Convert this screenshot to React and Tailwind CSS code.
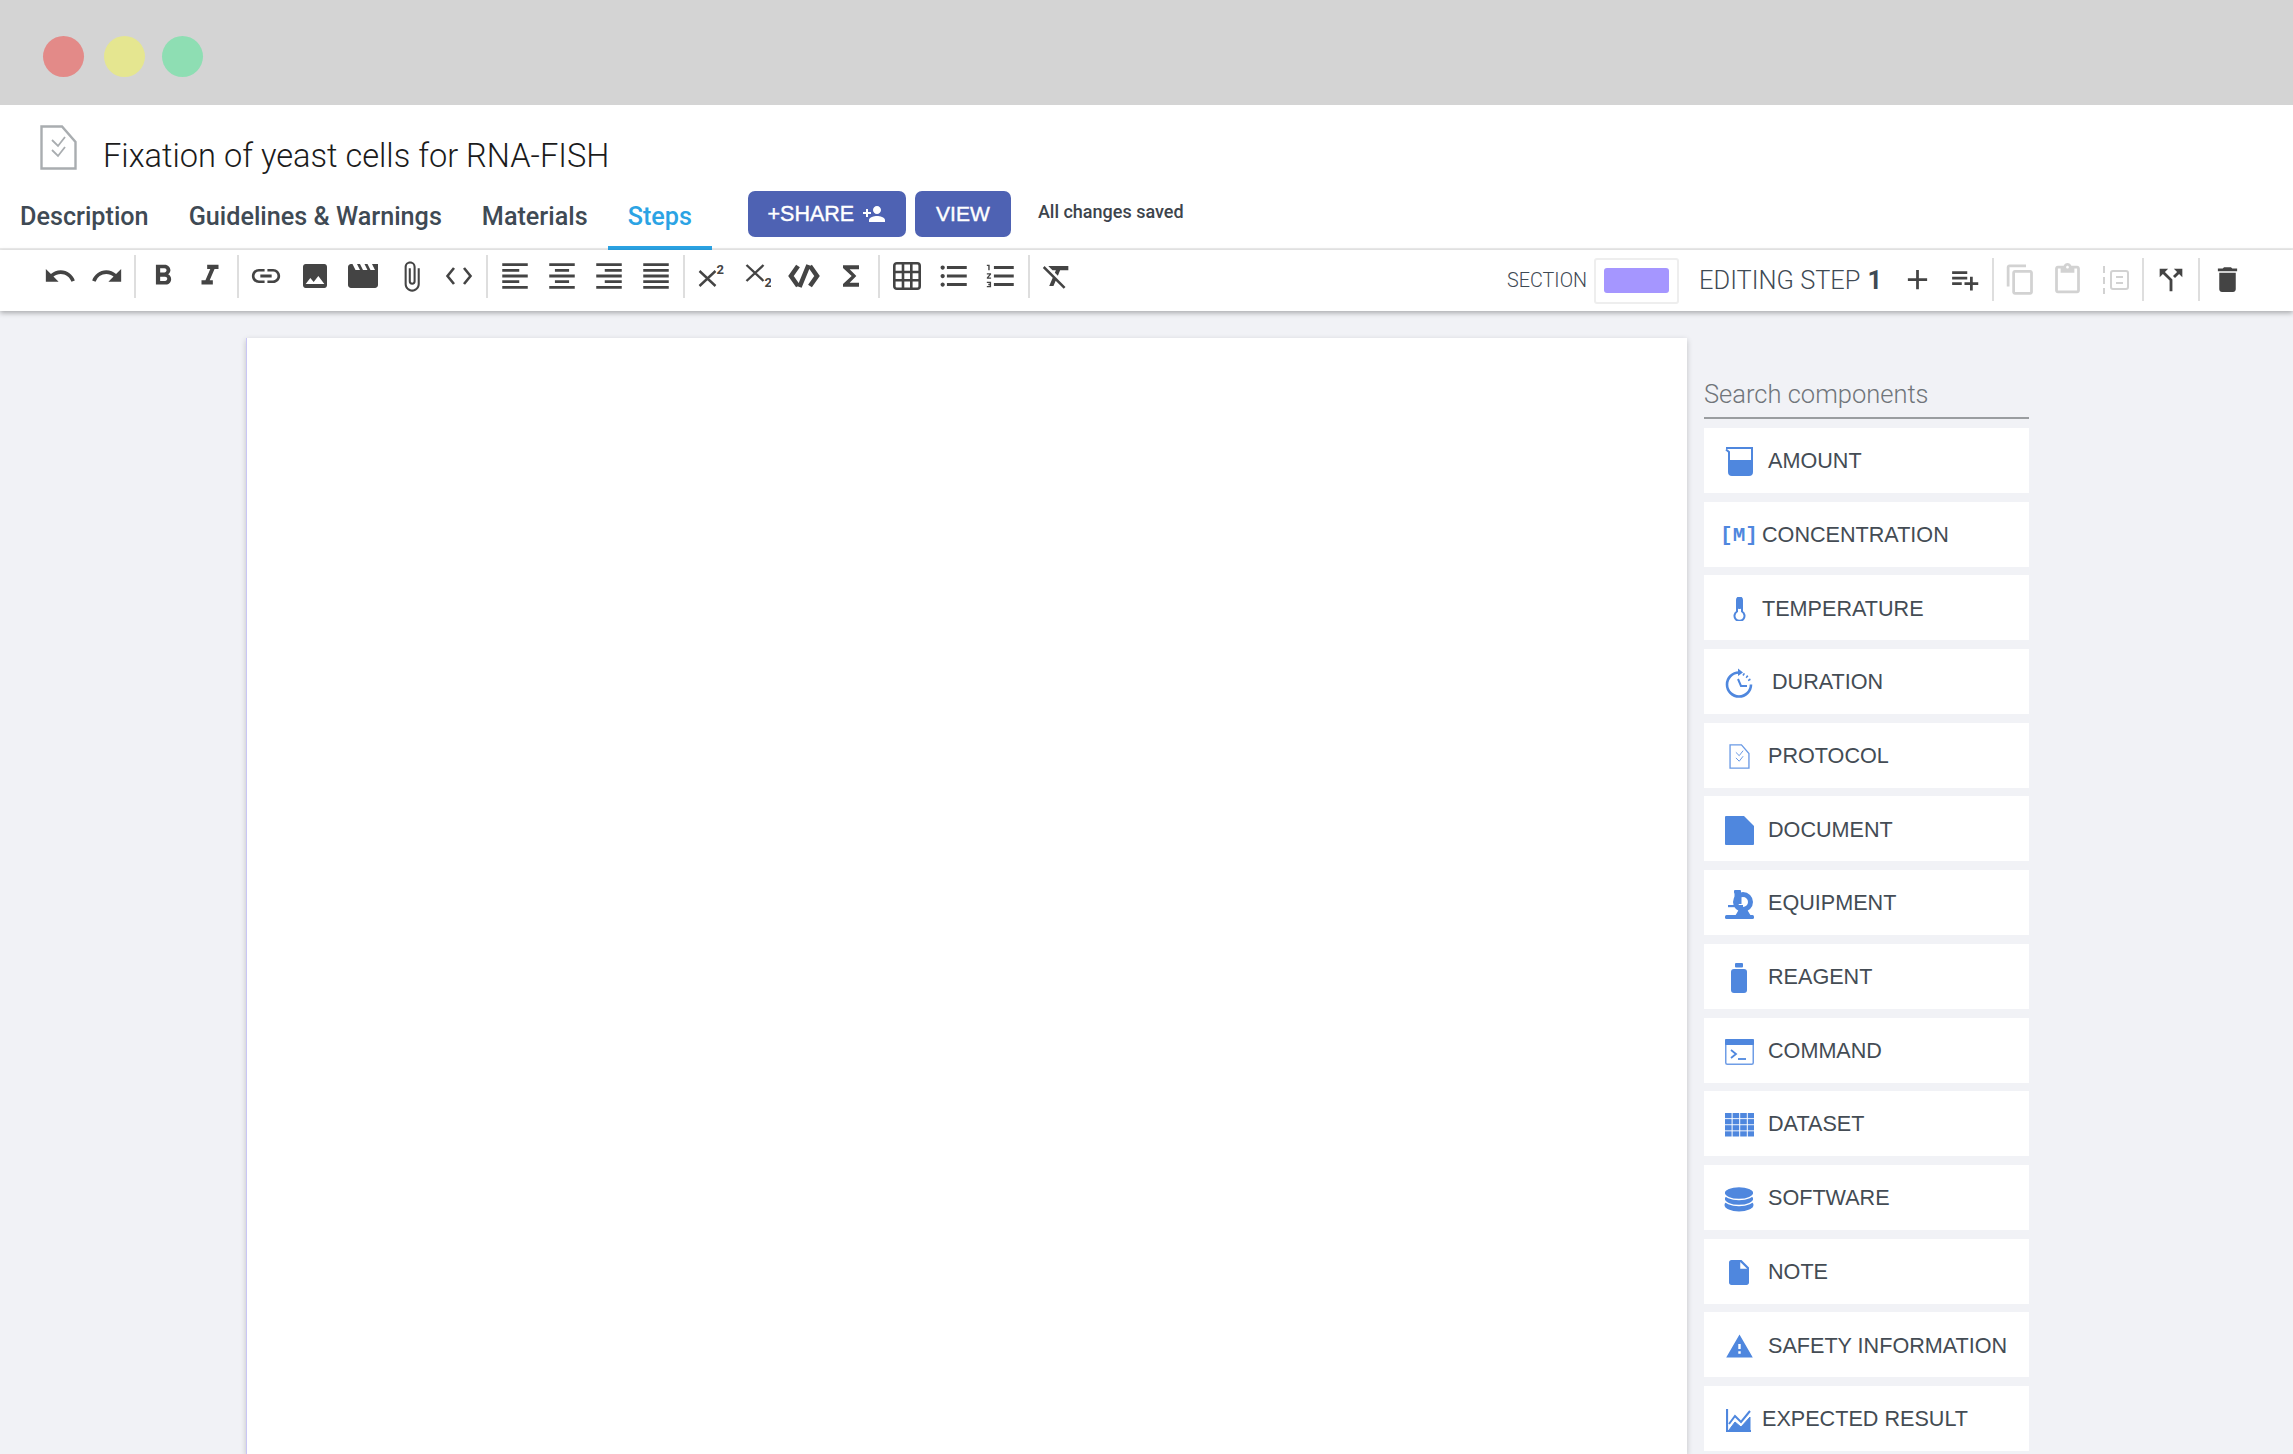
import {
  MdUndo, MdRedo, MdFormatBold, MdFormatItalic, MdLink, MdPhoto, MdMovie, MdAttachFile,
  MdFormatAlignLeft, MdFormatAlignCenter, MdFormatAlignRight, MdFormatAlignJustify,
  MdFunctions, MdFormatListBulleted, MdFormatListNumbered, MdFormatClear,
  MdAdd, MdPlaylistAdd, MdContentCopy, MdContentPaste, MdCallSplit, MdDelete,
  MdPersonAdd, MdInsertDriveFile, MdWarning,
} from 'react-icons/md'

const BLUE = '#4f87de'

function FileCheck({ className, color, width = 37, height = 45 }) {
  return (
    <svg className={className} width={width} height={height} viewBox="0 0 37 45" fill="none" stroke={color} strokeWidth="2.4">
      <path d="M1.5 1.5H22L35.5 17V43.5H1.5Z" />
      <path d="M12 15l6 6 7-9M12 25l6 6 7-9" strokeWidth="1.8" />
    </svg>
  )
}

function Beaker() {
  return (
    <svg width="28" height="30" viewBox="0 0 28 30">
      <path d="M1 2H27V26a3 3 0 0 1-3 3H7a3 3 0 0 1-3-3V6L1 3.5" fill="none" stroke={BLUE} strokeWidth="2" />
      <path d="M4 14H27V26a3 3 0 0 1-3 3H7a3 3 0 0 1-3-3Z" fill={BLUE} />
    </svg>
  )
}

function Thermometer() {
  return (
    <svg width="13" height="24" viewBox="0 0 13 24">
      <path d="M4 3a2.5 2.5 0 0 1 5 0V14.5a5 5 0 1 1-5 0Z" fill="none" stroke={BLUE} strokeWidth="2" />
      <rect x="4" y="1" width="5" height="11" rx="2" fill={BLUE} />
    </svg>
  )
}

function Duration() {
  return (
    <svg width="28" height="30" viewBox="0 0 28 30" fill="none" stroke={BLUE}>
      <path d="M14 4.5A12 12 0 1 0 26 16.5" strokeWidth="2.6" />
      <path d="M18 6l3.5 2.2 2.5 3 1.3 3" strokeWidth="2.6" strokeDasharray="1.6 2.4" />
      <path d="M13 11l3 7h6" strokeWidth="2" />
      <path d="M13 0.5l5 4-5 3.5Z" fill={BLUE} stroke="none" />
    </svg>
  )
}

function Doc() {
  return (
    <svg width="29" height="29" viewBox="0 0 29 29">
      <path d="M0 1a1 1 0 0 1 1-1H19L29 10V28a1 1 0 0 1-1 1H1a1 1 0 0 1-1-1Z" fill={BLUE} />
    </svg>
  )
}

function Microscope() {
  return (
    <svg width="29" height="29" viewBox="0 0 29 29" fill={BLUE}>
      <rect x="9" y="0" width="7" height="3.5" rx="1" />
      <rect x="9.5" y="3" width="7" height="11" />
      <circle cx="18" cy="12" r="7.5" fill="none" stroke={BLUE} strokeWidth="5" />
      <rect x="3" y="15" width="15" height="2.2" />
      <path d="M10 26l4-6.5h8l4 6.5Z" />
      <rect x="0" y="25" width="29" height="4" rx="1.5" />
    </svg>
  )
}

function Bottle() {
  return (
    <svg width="18" height="30" viewBox="0 0 18 30" fill={BLUE}>
      <rect x="5" y="0" width="8" height="4.5" rx="1" />
      <path d="M1 9a3 3 0 0 1 3-3h10a3 3 0 0 1 3 3v18a3 3 0 0 1-3 3H4a3 3 0 0 1-3-3Z" />
    </svg>
  )
}

function Command() {
  return (
    <svg width="29" height="26" viewBox="0 0 29 26" fill="none">
      <rect x="0.75" y="0.75" width="27.5" height="24.5" rx="1.5" stroke="#6f9de6" strokeWidth="1.5" />
      <rect x="0" y="0" width="29" height="6" rx="1" fill={BLUE} />
      <path d="M6 11l5 4-5 4" stroke={BLUE} strokeWidth="1.8" />
      <path d="M13 20h8" stroke={BLUE} strokeWidth="1.8" />
    </svg>
  )
}

function Dataset() {
  const cells = []
  for (let r = 0; r < 4; r++) {
    for (let c = 0; c < 4; c++) {
      cells.push(<rect key={`${r}-${c}`} x={c * 7.6} y={r * 6.1} width="6.6" height="5.2" />)
    }
  }
  return <svg width="29" height="24" viewBox="0 0 29 24" fill={BLUE}>{cells}</svg>
}

function Software() {
  return (
    <svg width="30" height="26" viewBox="0 0 30 26" fill={BLUE} stroke="#fff" strokeWidth="1.4">
      <ellipse cx="15" cy="19" rx="14.5" ry="6.5" stroke="none" />
      <ellipse cx="15" cy="13" rx="14.8" ry="6.5" />
      <ellipse cx="15" cy="7" rx="14.8" ry="6.5" />
    </svg>
  )
}

function Expected() {
  return (
    <svg width="26" height="24" viewBox="0 0 26 24" fill="none" stroke={BLUE}>
      <path d="M1 1V23H25" strokeWidth="2.2" />
      <path d="M3 16l6-8 6 6 9-11" strokeWidth="2" />
      <path d="M3 22l6-8 6 5 9-10V23H3Z" fill={BLUE} strokeWidth="1" />
    </svg>
  )
}

function Chevrons() {
  return (
    <svg width="28" height="20" viewBox="0 0 28 20" fill="none" stroke="#444" strokeWidth="2.6">
      <path d="M9 2L2.5 10L9 18M19 2L25.5 10L19 18" />
    </svg>
  )
}

function CodeBlock() {
  return (
    <svg width="32" height="26" viewBox="0 0 32 26" fill="none" stroke="#444" strokeWidth="4.6">
      <path d="M10 3L3 13L10 23M22 3L29 13L22 23M20.5 2L11.5 24" />
    </svg>
  )
}

function Superscript() {
  return (
    <svg width="26" height="24" viewBox="-1.5 -1 26 24" fill="none" stroke="#444" strokeWidth="2.4">
      <path d="M0 6L16 21M16 6L0 21" />
      <text x="17" y="9" fill="#444" stroke="none" fontSize="13" fontWeight="700" fontFamily="Roboto, sans-serif">2</text>
    </svg>
  )
}

function Subscript() {
  return (
    <svg width="26" height="24" viewBox="-1.5 0 26 24" fill="none" stroke="#444" strokeWidth="2.4">
      <path d="M0 1L17 17M17 1L0 17" />
      <text x="18" y="23" fill="#444" stroke="none" fontSize="13" fontWeight="700" fontFamily="Roboto, sans-serif">2</text>
    </svg>
  )
}

function TableGrid() {
  return (
    <svg width="28" height="28" viewBox="0 0 28 28" fill="none" stroke="#444" strokeWidth="2.6">
      <rect x="1.3" y="1.3" width="25.4" height="25.4" rx="2.5" />
      <path d="M10 1v26M18.3 1v26M1 10h26M1 18.3h26" />
    </svg>
  )
}

function InsertBox() {
  return (
    <svg width="28" height="30" viewBox="0 0 28 30" fill="none" stroke="#d2d2d2" strokeWidth="2">
      <path d="M3 1v28" strokeDasharray="7 4" />
      <rect x="10" y="6" width="17" height="18" rx="2" />
      <path d="M15 12h7M15 18h7" />
    </svg>
  )
}

const Sep = () => (
  <div className="w-[9px] flex justify-center shrink-0">
    <div className="w-[2px] h-[43px] bg-[#dedede]" />
  </div>
)

function Tool({ icon: Icon, size = 34, w = 'w-[47px]', color = 'text-[#444444]' }) {
  return (
    <button className={`${w} shrink-0 flex items-center justify-center ${color}`}>
      <Icon size={size} />
    </button>
  )
}

const tabs = ['Description', 'Guidelines & Warnings', 'Materials', 'Steps']

const components = [
  { label: 'AMOUNT', icon: <Beaker />, gap: 'ml-[14px]' },
  { label: 'CONCENTRATION', icon: <span className="font-['Liberation_Mono',monospace] font-bold text-[21px] text-[#4f87de] whitespace-nowrap mt-1">[M]</span>, gap: 'ml-[8px]' },
  { label: 'TEMPERATURE', icon: <Thermometer />, gap: 'ml-[8px]', shift: 'mt-[3px]' },
  { label: 'DURATION', icon: <Duration />, gap: 'ml-[18px]', shift: 'mt-[3px]' },
  { label: 'PROTOCOL', icon: <FileCheck color="#6a9ae5" width={21} height={25} />, gap: 'ml-[14px]', shift: 'mt-[3px]' },
  { label: 'DOCUMENT', icon: <Doc />, gap: 'ml-[14px]', shift: 'mt-[3px]' },
  { label: 'EQUIPMENT', icon: <Microscope />, gap: 'ml-[14px]', shift: 'mt-[3px]' },
  { label: 'REAGENT', icon: <Bottle />, gap: 'ml-[14px]', shift: 'mt-[3px]' },
  { label: 'COMMAND', icon: <Command />, gap: 'ml-[14px]', shift: 'mt-[3px]' },
  { label: 'DATASET', icon: <Dataset />, gap: 'ml-[14px]', shift: 'mt-[3px]' },
  { label: 'SOFTWARE', icon: <Software />, gap: 'ml-[14px]', shift: 'mt-[3px]' },
  { label: 'NOTE', icon: <MdInsertDriveFile size={37} color={BLUE} />, gap: 'ml-[14px]', shift: 'mt-[2px]' },
  { label: 'SAFETY INFORMATION', icon: <MdWarning size={29} color={BLUE} />, gap: 'ml-[14px]', shift: 'mt-[3px]' },
  { label: 'EXPECTED RESULT', icon: <Expected />, gap: 'ml-[8px]', shift: 'mt-[3px]' },
]

export default function App() {
  return (
    <div className="h-[1454px] overflow-hidden flex flex-col bg-[#f1f2f6] font-[Roboto,sans-serif]">
      <div className="h-[105px] shrink-0 bg-[#d4d4d4] flex items-center pl-[43px] pt-[7px]">
        <div className="w-[41px] h-[41px] rounded-full bg-[#e38a88]" />
        <div className="w-[41px] h-[41px] rounded-full bg-[#e5e690] ml-[20px]" />
        <div className="w-[41px] h-[41px] rounded-full bg-[#8edeb3] ml-[17px]" />
      </div>

      <div className="bg-white shrink-0">
        <div className="h-[85px] flex items-start">
          <FileCheck className="ml-[40px] mt-[20px]" color="#a9adb0" />
          <h1 className="ml-[26px] mt-[30px] text-[32.6px] leading-[42px] font-light text-[#1b1b1b]">
            Fixation of yeast cells for RNA-FISH
          </h1>
        </div>

        <div className="h-[60px] flex border-b-2 border-[#ececec]">
          {tabs.map((t) => (
            <button
              key={t}
              className={`h-[60px] px-[20px] pb-[3px] border-b-4 text-[25.2px] leading-[36px] font-medium whitespace-nowrap ${
                t === 'Steps' ? 'text-[#2ba3e4] border-[#2ba3e4]' : 'text-[#3f4a54] border-transparent'
              }`}
            >
              {t}
            </button>
          ))}
          <button className="ml-[36px] mt-[1px] w-[158px] h-[46px] rounded-[7px] bg-[#4e62b3] text-white flex items-center justify-center font-['Liberation_Sans',Arial,sans-serif] text-[21.5px] [-webkit-text-stroke:0.4px_white]">
            +SHARE
            <MdPersonAdd size={24} className="ml-[8px]" />
          </button>
          <button className="ml-[9px] mt-[1px] w-[96px] h-[46px] rounded-[7px] bg-[#4e62b3] text-white flex items-center justify-center font-['Liberation_Sans',Arial,sans-serif] text-[21px] [-webkit-text-stroke:0.4px_white]">
            VIEW
          </button>
          <span className="ml-[27px] mt-[11px] text-[18px] leading-[22px] font-medium text-[#3d444c]">All changes saved</span>
        </div>
      </div>

      <div className="h-[61px] shrink-0 bg-white flex items-center pl-[36px] pr-[42px] shadow-[0_2px_5px_rgba(0,0,0,0.3)] relative">
        <div className="flex items-center pb-[9px]">
          <Tool icon={MdUndo} />
          <Tool icon={MdRedo} />
          <Sep />
          <Tool icon={MdFormatBold} />
          <Tool icon={MdFormatItalic} />
          <Sep />
          <Tool icon={MdLink} w="w-[48.5px]" />
          <Tool icon={MdPhoto} size={32} w="w-[48.5px]" />
          <Tool icon={MdMovie} size={36} w="w-[48.5px]" />
          <Tool icon={MdAttachFile} size={33} w="w-[48.5px]" />
          <Tool icon={Chevrons} w="w-[46px]" />
          <Sep />
          <Tool icon={MdFormatAlignLeft} />
          <Tool icon={MdFormatAlignCenter} />
          <Tool icon={MdFormatAlignRight} />
          <Tool icon={MdFormatAlignJustify} />
          <Sep />
          <Tool icon={Superscript} w="w-[46.5px]" />
          <Tool icon={Subscript} w="w-[46.5px]" />
          <Tool icon={CodeBlock} w="w-[46.5px]" />
          <Tool icon={MdFunctions} size={32} w="w-[46.5px]" />
          <Sep />
          <Tool icon={TableGrid} />
          <Tool icon={MdFormatListBulleted} />
          <Tool icon={MdFormatListNumbered} />
          <Sep />
          <Tool icon={MdFormatClear} />
        </div>

        <div className="ml-auto flex items-center">
          <span className="text-[19.8px] font-light text-[#3f4a54]">SECTION</span>
          <div className="ml-[7px] w-[85px] h-[46px] border-2 border-[#eeeeee] rounded-[3px] flex items-center justify-center">
            <div className="w-[65px] h-[25px] rounded-[3px] bg-[#a596ff]" />
          </div>
          <span className="ml-[20px] text-[25.4px] font-light text-[#3f4a54]">EDITING STEP</span>
          <span className="ml-[7px] mr-[12px] text-[25.4px] font-bold text-[#3f4a54]">1</span>
          <div className="flex items-center pb-[2px]">
            <Tool icon={MdAdd} size={33} />
            <Tool icon={MdPlaylistAdd} size={33} />
            <Sep />
            <Tool icon={MdContentCopy} size={33} color="text-[#d2d2d2]" />
            <Tool icon={MdContentPaste} size={33} color="text-[#d2d2d2]" />
            <Tool icon={InsertBox} />
            <Sep />
            <Tool icon={MdCallSplit} />
            <Sep />
            <Tool icon={MdDelete} size={33} w="w-[48px]" />
          </div>
        </div>
      </div>

      <div className="flex-1 flex items-stretch min-h-0">
        <div className="ml-[246px] mt-[27px] w-[1441px] bg-white border-l border-[#c9c6f5] shadow-[0_2px_6px_rgba(0,0,0,0.2)]" />

        <div className="ml-[17px] mt-[59px] w-[325px] flex flex-col">
          <input
            placeholder="Search components"
            className="h-[49px] w-full bg-transparent border-b-2 border-[#9a9da0] outline-none text-[25.5px] font-light placeholder:text-[#70757a]"
          />
          <div className="mt-[9px] flex flex-col gap-[8.7px]">
            {components.map((c) => (
              <div key={c.label} className="h-[65px] shrink-0 bg-white flex items-center pl-[20px]">
                <div className={`w-[30px] flex justify-center ${c.shift || ''}`}>{c.icon}</div>
                <span className={`${c.gap} pt-[2px] font-['Liberation_Sans',Arial,sans-serif] text-[21.6px] text-[#444c54] whitespace-nowrap`}>
                  {c.label}
                </span>
              </div>
            ))}
          </div>
        </div>
      </div>
    </div>
  )
}
